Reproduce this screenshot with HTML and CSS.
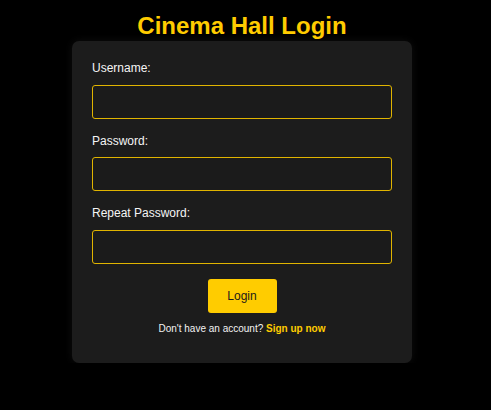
FILE: index.html
```html
<!DOCTYPE html>
<html lang="en">
<head>
<meta charset="utf-8">
<title>Cinema Hall Login</title>
<link rel="stylesheet" href="styles.css">
</head>
<body>
<main class="page">
  <h1 class="title">Cinema Hall Login</h1>
  <form class="card">
    <div class="field">
      <label class="label" for="username">Username:</label>
      <input class="input" id="username" type="text">
    </div>
    <div class="field">
      <label class="label" for="password">Password:</label>
      <input class="input" id="password" type="password">
    </div>
    <div class="field">
      <label class="label" for="repeat">Repeat Password:</label>
      <input class="input" id="repeat" type="password">
    </div>
    <div class="actions">
      <button class="btn" type="button">Login</button>
    </div>
    <p class="note">Don't have an account? <a class="link" href="#">Sign up now</a></p>
  </form>
</main>
</body>
</html>
```
FILE: styles.css
```css
* { box-sizing: border-box; }
html, body { margin: 0; background: #000; }
body {
  font-family: "Liberation Sans", Arial, sans-serif;
  color: #f2f2f2;
  padding-right: 7px;
}
.page {
  display: flex;
  flex-direction: column;
  align-items: center;
}
.title {
  margin: 12px 0 2px;
  font-size: 24px;
  line-height: 27px;
  font-weight: bold;
  color: #ffcc00;
  text-shadow: 2px 2px 4px rgba(0,0,0,0.5);
}
.card {
  width: 340px;
  background: #1c1c1c;
  border-radius: 7px;
  padding: 20px 20px 20px;
  box-shadow: 0 0 8px rgba(255,255,255,0.06);
}
.field {
  display: flex;
  flex-direction: column;
  margin-bottom: 15px;
}
.label {
  font-size: 12px;
  line-height: 14px;
  margin-bottom: 9.67px;
  color: #f5f5f5;
}
.input {
  height: 34px;
  width: 100%;
  background: #1b1b1b;
  border: 1px solid #e0b400;
  border-radius: 3px;
  color: #fff;
  padding: 0 8px;
  outline: none;
}
.actions {
  display: flex;
  justify-content: center;
}
.btn {
  width: 69px;
  height: 34px;
  background: #ffcc00;
  color: #1a1a1a;
  border: none;
  border-radius: 3px;
  font-family: "Liberation Sans", Arial, sans-serif;
  font-size: 12px;
  padding: 0;
}
.note {
  margin: 10px 0 8px;
  text-align: center;
  font-size: 10px;
  line-height: 12px;
  color: #f2f2f2;
}
.link {
  color: #ffcc00;
  font-weight: bold;
  text-decoration: none;
}
```
